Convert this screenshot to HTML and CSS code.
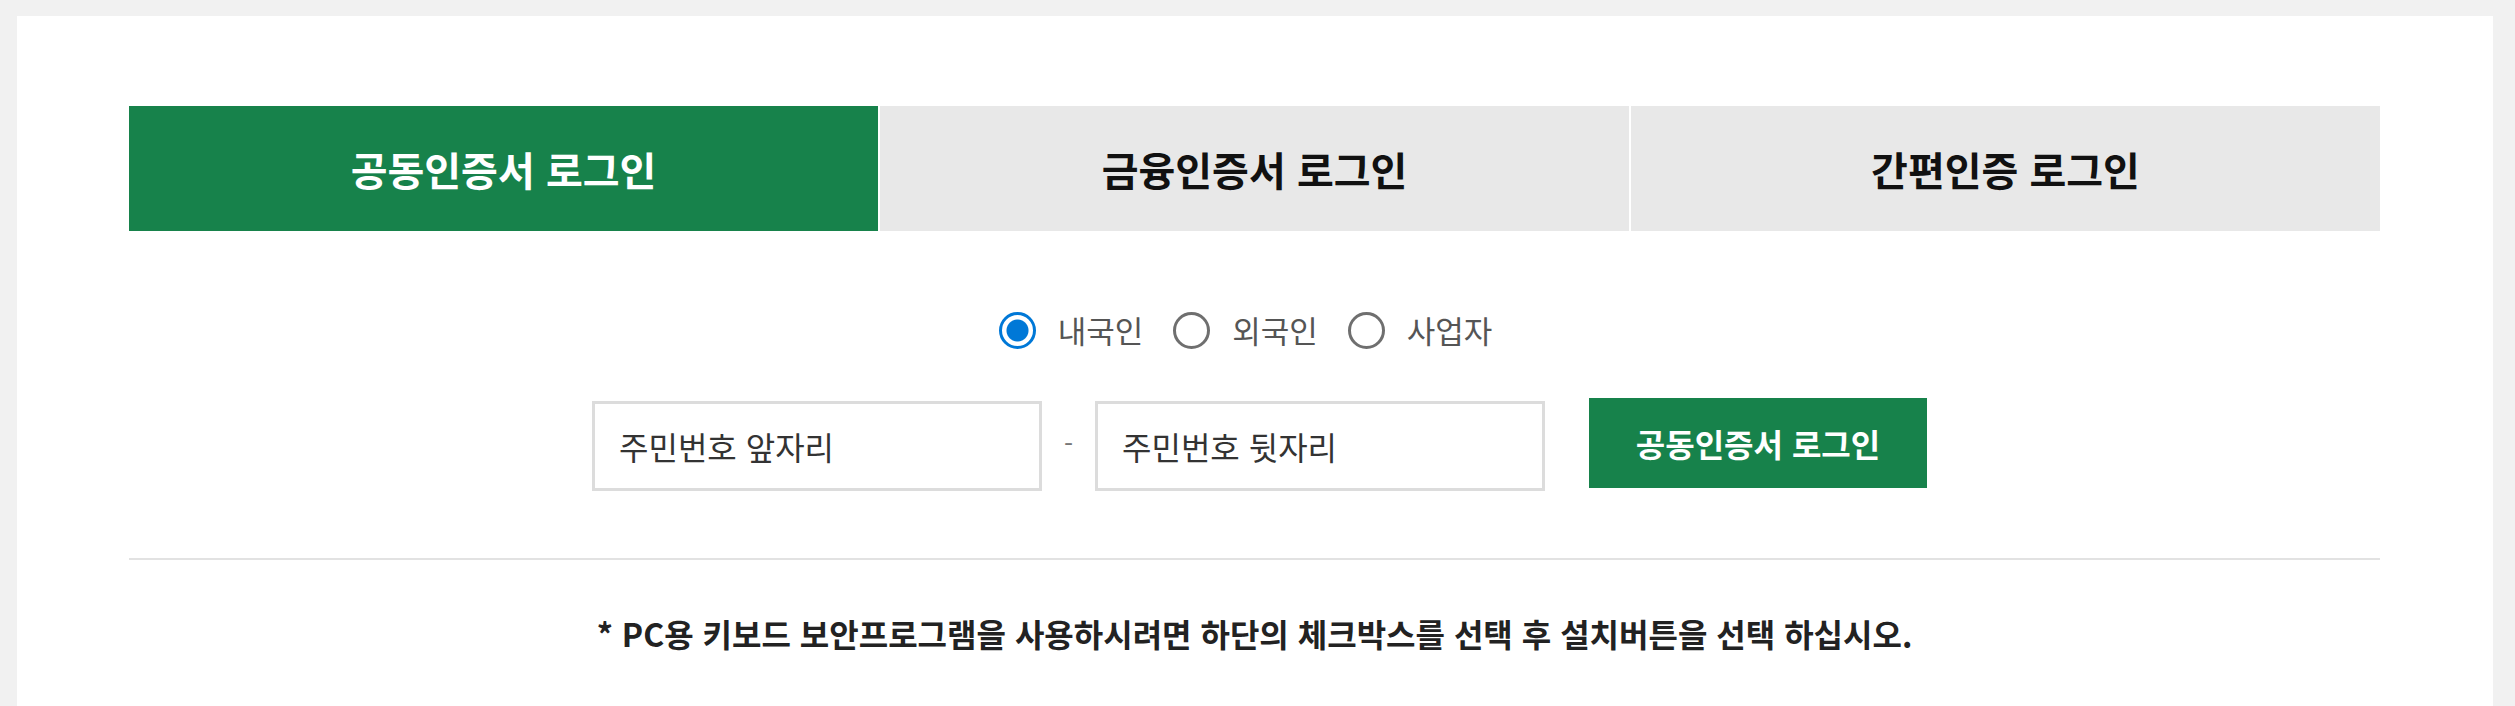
FILE: index.html
```html
<!DOCTYPE html>
<html lang="ko">
<head>
<meta charset="utf-8">
<title>공동인증서 로그인</title>
<link rel="stylesheet" href="styles.css">
</head>
<body>
<div class="page">
  <div class="tabs">
    <div class="tab tab-active">공동인증서 로그인</div>
    <div class="tab">금융인증서 로그인</div>
    <div class="tab">간편인증 로그인</div>
  </div>

  <div class="radios">
    <label class="radio-item"><input class="radio" type="radio" name="kind" checked><span class="radio-label">내국인</span></label>
    <label class="radio-item"><input class="radio" type="radio" name="kind"><span class="radio-label">외국인</span></label>
    <label class="radio-item"><input class="radio" type="radio" name="kind"><span class="radio-label">사업자</span></label>
  </div>

  <div class="form-row">
    <input class="field" type="text" placeholder="주민번호 앞자리">
    <span class="dash">-</span>
    <input class="field" type="password" placeholder="주민번호 뒷자리">
    <button class="login-btn" type="button">공동인증서 로그인</button>
  </div>

  <div class="divider"></div>

  <p class="note">* PC용 키보드 보안프로그램을 사용하시려면 하단의 체크박스를 선택 후 설치버튼을 선택 하십시오.</p>
</div>
</body>
</html>
```

FILE: styles.css
```css
html, body {
  margin: 0;
  padding: 0;
}

body {
  background: #f1f1f1;
  font-family: "Noto Sans CJK KR", "Noto Sans", sans-serif;
  color: #222;
}

.page {
  box-sizing: border-box;
  height: 690px;
  margin: 16px 22px 0 17px;
  background: #ffffff;
  padding: 90px 113px 0 112px;
  overflow: hidden;
}

.tabs {
  display: grid;
  grid-template-columns: repeat(3, 1fr);
  column-gap: 2px;
  height: 125px;
}

.tab {
  display: flex;
  align-items: center;
  justify-content: center;
  background: #e8e8e8;
  color: #111;
  font-size: 40px;
  font-weight: 700;
}

.tab-active {
  background: #17824b;
  color: #ffffff;
}

.radios {
  display: flex;
  justify-content: center;
  align-items: center;
  margin-top: 80px;
  height: 38px;
  padding-right: 18px;
}

.radio-item {
  display: flex;
  align-items: center;
  margin-right: 30px;
  cursor: pointer;
}

.radio-item:last-child {
  margin-right: 0;
}

.radio {
  appearance: none;
  -webkit-appearance: none;
  margin: 0;
  width: 37px;
  height: 37px;
  border: 3px solid #6f6f6f;
  border-radius: 50%;
  background: #fff;
  box-sizing: border-box;
}

.radio:checked {
  border-color: #0078d7;
  background: radial-gradient(circle, #0078d7 0, #0078d7 10.5px, #ffffff 11.5px);
}

.radio-label {
  margin-left: 22px;
  font-size: 31px;
  line-height: 38px;
  color: #555;
}

.form-row {
  display: flex;
  justify-content: center;
  align-items: flex-start;
  margin-top: 49px;
  padding-left: 10px;
}

.field {
  margin-top: 3px;
  width: 450px;
  height: 90px;
  box-sizing: border-box;
  border: 3px solid #dcdcdc;
  padding: 0 0 0 24px;
  font-family: "Noto Sans CJK KR", "Noto Sans", sans-serif;
  font-size: 32px;
  color: #333;
  outline: none;
}

.field::placeholder {
  color: #333;
  opacity: 1;
}

.dash {
  width: 53px;
  text-align: center;
  margin-top: 3px;
  line-height: 84px;
  font-size: 26px;
  color: #777;
}

.login-btn {
  margin-left: 44px;
  width: 338px;
  height: 90px;
  border: 0;
  background: #17824b;
  color: #fff;
  font-family: "Noto Sans CJK KR", "Noto Sans", sans-serif;
  font-size: 32px;
  font-weight: 700;
  cursor: pointer;
}

.divider {
  margin-top: 67px;
  height: 2px;
  background: #e2e2e2;
}

.note {
  margin: 53px 0 0;
  text-align: center;
  font-size: 32px;
  line-height: 40px;
  font-weight: 700;
  color: #222;
}
```
